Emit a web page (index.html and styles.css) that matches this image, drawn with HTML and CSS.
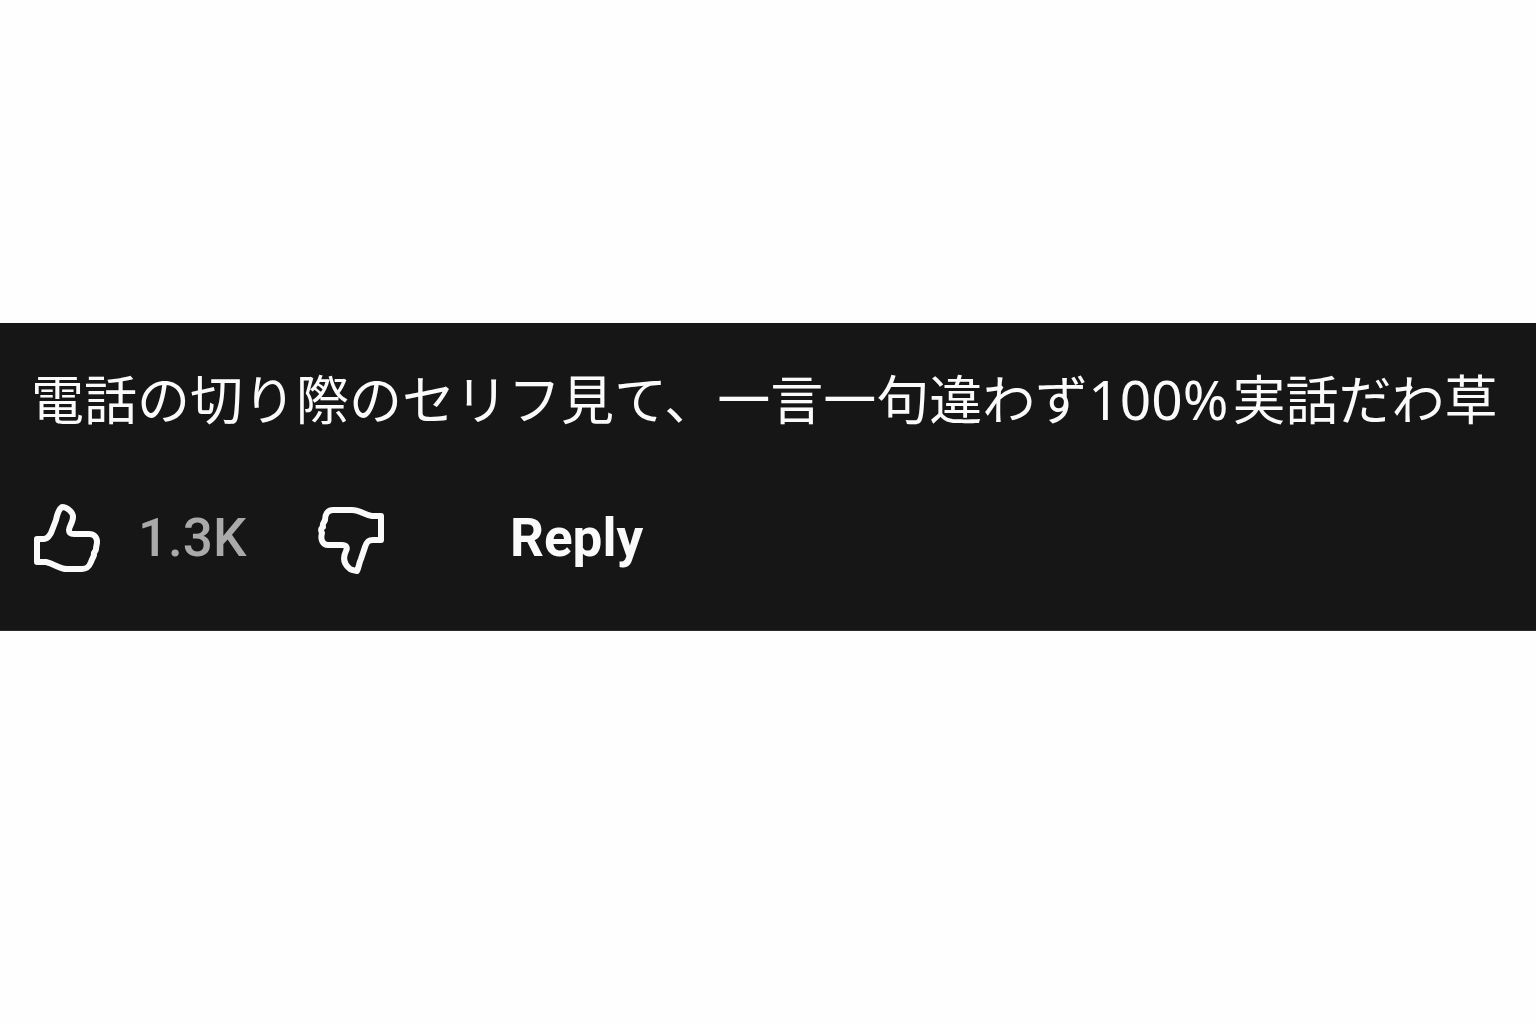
FILE: index.html
```html
<!DOCTYPE html>
<html lang="ja">
<head>
<meta charset="utf-8">
<meta name="viewport" content="width=device-width, initial-scale=1">
<title>Comment</title>
<link rel="stylesheet" href="styles.css">
</head>
<body>
<main class="page">
  <article class="comment">
    <p class="comment-text">電話の切り際のセリフ見て、一言一句違わず<span class="number">100%</span>実話だわ草</p>
    <div class="actions">
      <button class="icon-button" type="button" aria-label="Like">
        <svg class="icon" viewBox="0 0 72 72" aria-hidden="true"><path d="M6 37H13C17 37 18 34 20 31L25 18C26 13 28 7 31 5C36 5 42 10 42 15C42 20 38 25 38 28C38 31 40 32 43 32H58C63 32 66 35 66 40C66 43 65 44 65 47C65 50 62 50 63 53C62 56 61 57 60 60C58 65 56 67 51 67H36C28 67 24 62 15 60H6Z"/></svg>
      </button>
      <span class="count">1.3K</span>
      <button class="icon-button" type="button" aria-label="Dislike">
        <svg class="icon" viewBox="0 0 72 72" aria-hidden="true"><path d="M67 14H58C51 13 46 8 38 8H19C13 8 11 13 11 18C10 21 8 21 9 25C6 27 7 29 8 31C6 38 9 43 14 43H28C32 43 34 45 32 49C28 57 31 63 36 67C39 69 41 68 43 69C45 65 45 61 47 57L51 45C53 39 55 38 59 38H67Z"/></svg>
      </button>
      <button class="reply" type="button">Reply</button>
    </div>
  </article>
</main>
</body>
</html>
```
FILE: styles.css
```css
* {
  box-sizing: border-box;
}

body {
  margin: 0;
  background: #fefefe;
  font-family: Roboto, "Noto Sans CJK JP", sans-serif;
}

.page {
  padding: 323px 0;
}

.comment {
  padding: 42px 31px 56px;
  background: #161616;
  border-bottom: 1px solid #2b2b2b;
  color: #fafafa;
}

.comment-text {
  margin: 0;
  font-family: "Noto Sans CJK JP", sans-serif;
  font-size: 53px;
  line-height: 64px;
  white-space: nowrap;
}

.number {
  margin-right: 4px;
  font-family: "Noto Sans", sans-serif;
  font-size: 55px;
  line-height: 64px;
}

.actions {
  display: flex;
  align-items: center;
  margin-top: 71px;
}

.icon-button,
.reply {
  padding: 0;
  border: 0;
  background: none;
  color: inherit;
  font: inherit;
  cursor: pointer;
}

.icon {
  display: block;
  width: 72px;
  height: 72px;
  fill: none;
  stroke: currentColor;
  stroke-width: 6;
  stroke-linejoin: round;
}

.count {
  width: 176px;
  margin-left: 35px;
  color: #aaa;
  font-size: 53px;
  font-weight: 500;
  line-height: 72px;
}

.reply {
  margin-left: 124px;
  font-size: 53px;
  font-weight: 700;
  line-height: 72px;
}
```
